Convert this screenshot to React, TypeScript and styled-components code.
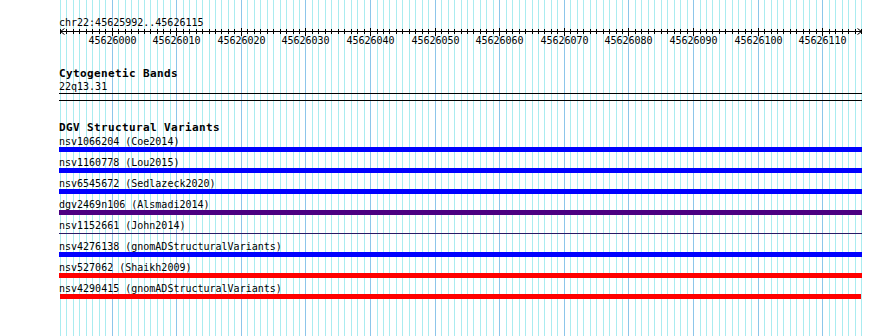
import React from 'react'
import styled, { createGlobalStyle } from 'styled-components'

const START = 45625992
const STEPS = 124
const COL_LEFT = 59
const SCALE_LEFT = 60
const SCALE_WIDTH = 801

// x position of base boundary i, in page pixels
const baseX = (i: number) => Math.round(SCALE_LEFT + (i * SCALE_WIDTH) / STEPS)

const GlobalStyle = createGlobalStyle`
  html, body {
    margin: 0;
    padding: 0;
    background: #ffffff;
  }
  body {
    font-family: "DejaVu Sans Mono", "Liberation Mono", monospace;
    color: #000000;
  }
`

const Page = styled.div`
  position: relative;
  width: 890px;
  height: 336px;
  overflow: hidden;
  background: #ffffff;
`

const GridLayer = styled.svg`
  position: absolute;
  top: 0;
  left: 0;
  z-index: 0;
`

const Column = styled.div`
  position: relative;
  z-index: 1;
  width: 803px;
  padding: 17px 0 0 ${COL_LEFT}px;
`

const Mono = styled.div`
  font-size: 10px;
  line-height: 11px;
  white-space: pre;
`

const TrackTitle = styled.div<{ $gap: number }>`
  margin-top: ${({ $gap }) => $gap}px;
  font-size: 11px;
  line-height: 12px;
  font-weight: bold;
  letter-spacing: 0.38px;
  white-space: pre;
`

const RulerSvg = styled.svg`
  display: block;
  overflow: visible;
`

const BandLabel = styled(Mono)`
  margin-top: 1px;
`

const BandRule = styled.div`
  margin-top: 1px;
  height: 6px;
  border-top: 1px solid #000000;
  border-bottom: 1px solid #000000;
`

const Rows = styled.div`
  margin-top: 2px;
  display: flex;
  flex-direction: column;
`

const Row = styled.div`
  display: flex;
  flex-direction: column;
`

const Bar = styled.div<{ $color: string; $thin?: boolean; $inset?: boolean }>`
  background: ${({ $color }) => $color};
  height: ${({ $thin }) => ($thin ? 1 : 5)}px;
  margin: ${({ $thin }) => ($thin ? '2px 0 7px' : '0 0 5px')};
  margin-left: ${({ $inset }) => ($inset ? 1 : 0)}px;
  width: ${({ $inset }) => ($inset ? 801 : 803)}px;
`

type Variant = {
  name: string
  source: string
  color: string
  thin?: boolean
  inset?: boolean
}

const variants: Variant[] = [
  { name: 'nsv1066204', source: 'Coe2014', color: '#0000ff' },
  { name: 'nsv1160778', source: 'Lou2015', color: '#0000ff' },
  { name: 'nsv6545672', source: 'Sedlazeck2020', color: '#0000ff' },
  { name: 'dgv2469n106', source: 'Alsmadi2014', color: '#4b0082' },
  { name: 'nsv1152661', source: 'John2014', color: '#2a1a66', thin: true },
  { name: 'nsv4276138', source: 'gnomADStructuralVariants', color: '#0000ff' },
  { name: 'nsv527062', source: 'Shaikh2009', color: '#ff0000' },
  { name: 'nsv4290415', source: 'gnomADStructuralVariants', color: '#ff0000', inset: true },
]

const Grid = () => {
  const lines = []
  for (let i = 0; i <= STEPS; i++) {
    const major = (START + i) % 10 === 0
    lines.push(
      <rect
        key={i}
        x={baseX(i)}
        y={0}
        width={1}
        height={336}
        fill={major ? '#8cc6ea' : '#aaecf0'}
      />
    )
  }
  return (
    <GridLayer width={890} height={336}>
      {lines}
    </GridLayer>
  )
}

const Ruler = () => {
  const ticks = []
  const labels = []
  for (let i = 0; i <= STEPS; i++) {
    const x = baseX(i) - COL_LEFT + 0.5
    const major = (START + i) % 10 === 0
    ticks.push(
      <line key={i} x1={x} x2={x} y1={major ? 0 : 1} y2={major ? 8 : 6} stroke="#000" strokeWidth={1} />
    )
    if (major) {
      labels.push(
        <text
          key={i}
          x={x}
          y={16}
          textAnchor="middle"
          fontSize={10}
          fontFamily='"DejaVu Sans Mono", monospace'
          fill="#000"
        >
          {START + i}
        </text>
      )
    }
  }
  const l = SCALE_LEFT - COL_LEFT + 0.5
  const r = SCALE_LEFT + SCALE_WIDTH - COL_LEFT + 0.5
  return (
    <RulerSvg width={806} height={20}>
      <line x1={l} x2={r} y1={3.5} y2={3.5} stroke="#000" strokeWidth={1} />
      <polyline points={`${l + 4},0.5 ${l},3.5 ${l + 4},6.5`} fill="none" stroke="#000" strokeWidth={1} />
      <polyline points={`${r - 4},0.5 ${r},3.5 ${r - 4},6.5`} fill="none" stroke="#000" strokeWidth={1} />
      {ticks}
      {labels}
    </RulerSvg>
  )
}

export default function App() {
  return (
    <Page>
      <GlobalStyle />
      <Grid />
      <Column>
        <Mono>chr22:45625992..45626115</Mono>
        <Ruler />
        <TrackTitle $gap={20}>Cytogenetic Bands</TrackTitle>
        <BandLabel>22q13.31</BandLabel>
        <BandRule />
        <TrackTitle $gap={21}>DGV Structural Variants</TrackTitle>
        <Rows>
          {variants.map((v) => (
            <Row key={v.name}>
              <Mono>
                {v.name} ({v.source})
              </Mono>
              <Bar $color={v.color} $thin={v.thin} $inset={v.inset} />
            </Row>
          ))}
        </Rows>
      </Column>
    </Page>
  )
}
